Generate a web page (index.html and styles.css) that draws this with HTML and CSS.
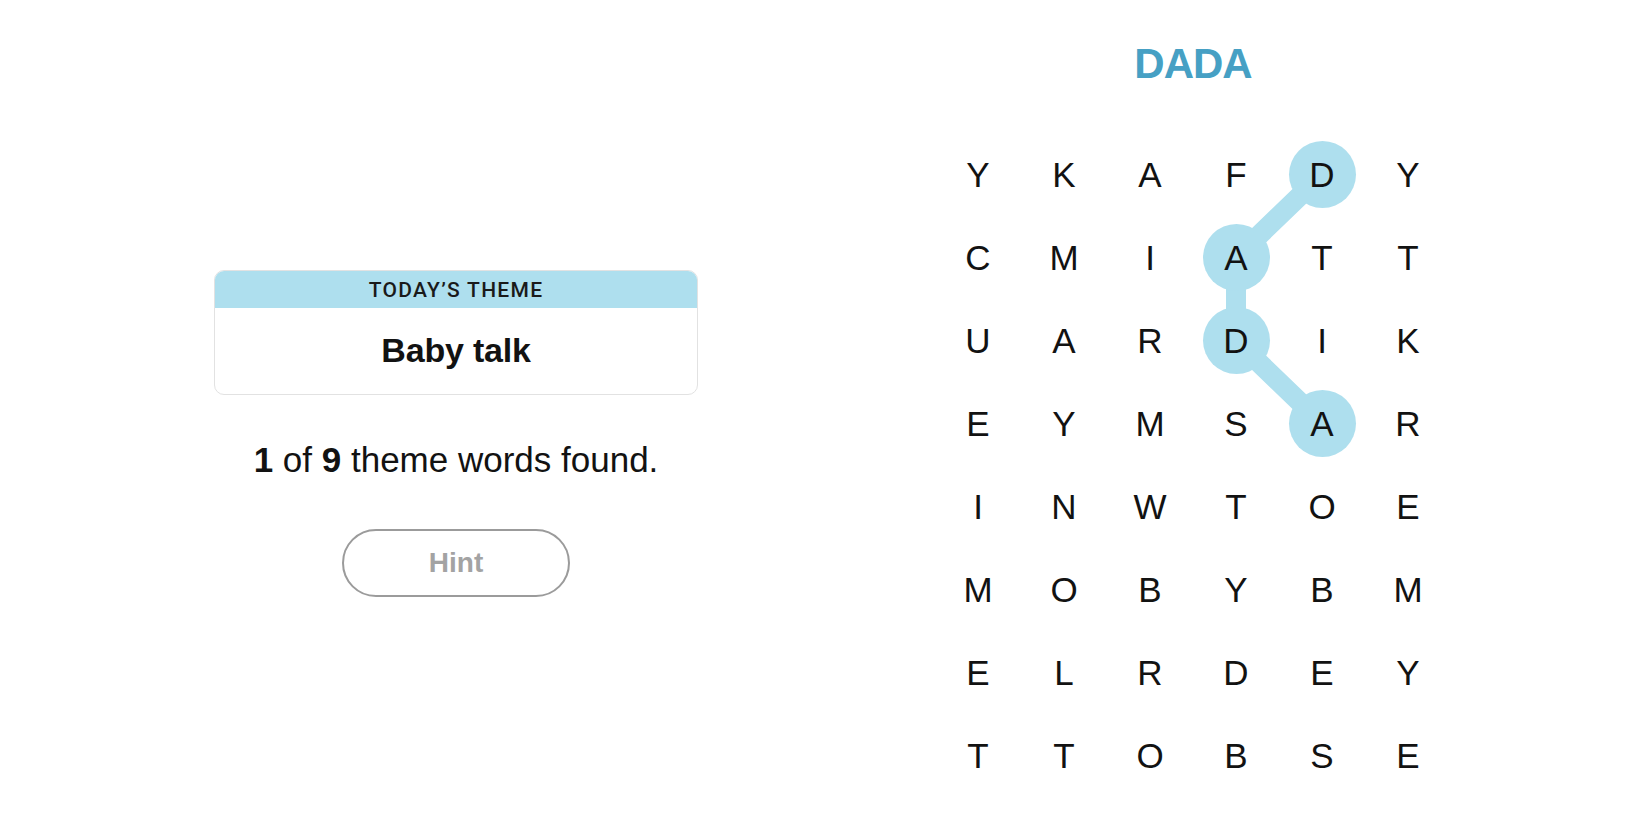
FILE: index.html
```html
<!DOCTYPE html>
<html lang="en">
<head>
    <meta charset="UTF-8">
    <meta name="viewport" content="width=device-width, initial-scale=1.0">
    <title>Strands</title>
    <link rel="stylesheet" href="styles.css">
</head>
<body>
    <div class="game">
        <div class="side">
            <div class="theme-card">
                <div class="theme-label">TODAY&rsquo;S THEME</div>
                <div class="theme-name">Baby talk</div>
            </div>
            <p class="progress"><b>1</b> of <b>9</b> theme words found.</p>
            <button class="hint-btn">Hint</button>
        </div>

        <div class="board">
            <h1 class="current-word">DADA</h1>
            <div class="grid-wrap">
                <!-- path of the word being spelled -->
                <svg class="path" width="516" height="664" viewBox="0 0 516 664">
                    <polyline points="387,41.5 301,124.5 301,207.5 387,290.5" fill="none" stroke="#aedfee" stroke-width="20" stroke-linejoin="round"/>
                </svg>
                <div class="grid" id="grid"></div>
            </div>
        </div>
    </div>

    <script>
        const letters = [
            'YKAFDY',
            'CMIATT',
            'UARDIK',
            'EYMSAR',
            'INWTOE',
            'MOBYBM',
            'ELRDEY',
            'TTOBSE'
        ];
        // cells that are part of the current selection (row-col)
        const selected = ['0-4', '1-3', '2-3', '3-4'];

        const grid = document.getElementById('grid');
        letters.forEach((row, r) => {
            row.split('').forEach((ch, c) => {
                const cell = document.createElement('div');
                cell.className = 'cell';
                const span = document.createElement('span');
                span.textContent = ch;
                if (selected.includes(r + '-' + c)) {
                    span.className = 'picked';
                }
                cell.appendChild(span);
                grid.appendChild(cell);
            });
        });
    </script>
</body>
</html>
```

FILE: styles.css
```css
body {
    margin: 0;
    font-family: "Liberation Sans", Arial, sans-serif;
    background-color: #ffffff;
    color: #121212;
}
.game {
    display: flex;
    align-items: flex-start;
    height: 825px;
    padding-left: 214px;
    gap: 237px;
}
.side {
    width: 484px;
    padding-top: 270px;
    display: flex;
    flex-direction: column;
    align-items: center;
}
.theme-card {
    width: 100%;
    box-sizing: border-box;
    border: 1px solid #e2e2e2;
    border-radius: 10px;
    overflow: hidden;
    text-align: center;
}
.theme-label {
    background-color: #aedfee;
    height: 37px;
    line-height: 38px;
    font-family: Roboto, "Liberation Sans", sans-serif;
    font-size: 21px;
    font-weight: 500;
    letter-spacing: 1.3px;
    color: #1a1a1a;
}
.theme-name {
    height: 86px;
    line-height: 84px;
    font-size: 34px;
    font-weight: bold;
    letter-spacing: -0.2px;
}
.progress {
    margin: 45px 0 0;
    font-size: 35px;
    line-height: 40px;
}
.hint-btn {
    margin-top: 49px;
    width: 228px;
    height: 68px;
    border: 2.5px solid #9b9b9b;
    border-radius: 34px;
    background: #ffffff;
    color: #a3a3a3;
    font-family: "Liberation Sans", Arial, sans-serif;
    font-size: 28px;
    font-weight: bold;
    cursor: pointer;
}
.board {
    width: 516px;
    padding-top: 43px;
}
.current-word {
    margin: 0 0 48px;
    text-align: center;
    font-size: 42px;
    line-height: 42px;
    letter-spacing: -1px;
    color: #46a0c4;
}
.grid-wrap {
    position: relative;
}
.path {
    position: absolute;
    top: 0;
    left: 0;
}
.grid {
    position: relative;
    display: grid;
    grid-template-columns: repeat(6, 86px);
    grid-auto-rows: 83px;
}
.cell {
    display: flex;
    justify-content: center;
    align-items: center;
}
.cell span {
    width: 67px;
    height: 67px;
    border-radius: 50%;
    display: flex;
    justify-content: center;
    align-items: center;
    font-size: 35px;
    line-height: 35px;
    color: #121212;
}
.cell span.picked {
    background-color: #aedfee;
}
```
